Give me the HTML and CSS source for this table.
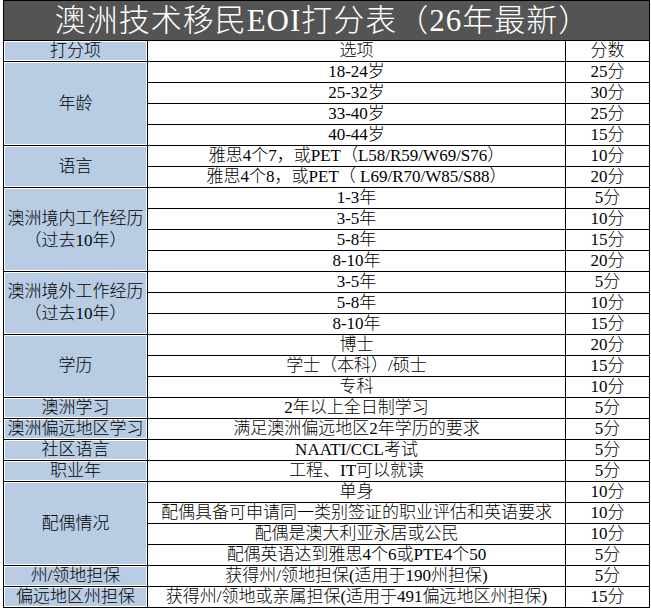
FILE: index.html
```html
<!DOCTYPE html>
<html lang="zh-CN">
<head>
<meta charset="utf-8">
<title>澳洲技术移民EOI打分表</title>
<link rel="stylesheet" href="styles.css">
</head>
<body>
<table class="eoi">
  <colgroup><col class="c1"><col class="c2"><col class="c3"></colgroup>
  <tr class="title"><td colspan="3">澳洲技术移民EOI打分表（26年最新）</td></tr>
  <tr><td class="cat">打分项</td><td>选项</td><td>分数</td></tr>
  <tr><td class="cat" rowspan="4">年龄</td><td>18-24岁</td><td>25分</td></tr>
  <tr><td>25-32岁</td><td>30分</td></tr>
  <tr><td>33-40岁</td><td>25分</td></tr>
  <tr><td>40-44岁</td><td>15分</td></tr>
  <tr><td class="cat" rowspan="2">语言</td><td>雅思4个7，或PET（L58/R59/W69/S76）</td><td>10分</td></tr>
  <tr><td>雅思4个8，或PET（ L69/R70/W85/S88）</td><td>20分</td></tr>
  <tr><td class="cat two" rowspan="4">澳洲境内工作经历<br>（过去10年）</td><td>1-3年</td><td>5分</td></tr>
  <tr><td>3-5年</td><td>10分</td></tr>
  <tr><td>5-8年</td><td>15分</td></tr>
  <tr><td>8-10年</td><td>20分</td></tr>
  <tr><td class="cat two" rowspan="3">澳洲境外工作经历<br>（过去10年）</td><td>3-5年</td><td>5分</td></tr>
  <tr><td>5-8年</td><td>10分</td></tr>
  <tr><td>8-10年</td><td>15分</td></tr>
  <tr><td class="cat" rowspan="3">学历</td><td>博士</td><td>20分</td></tr>
  <tr><td>学士（本科）/硕士</td><td>15分</td></tr>
  <tr><td>专科</td><td>10分</td></tr>
  <tr><td class="cat">澳洲学习</td><td>2年以上全日制学习</td><td>5分</td></tr>
  <tr><td class="cat">澳洲偏远地区学习</td><td>满足澳洲偏远地区2年学历的要求</td><td>5分</td></tr>
  <tr><td class="cat">社区语言</td><td>NAATI/CCL考试</td><td>5分</td></tr>
  <tr><td class="cat">职业年</td><td>工程、IT可以就读</td><td>5分</td></tr>
  <tr><td class="cat" rowspan="4">配偶情况</td><td>单身</td><td>10分</td></tr>
  <tr><td>配偶具备可申请同一类别签证的职业评估和英语要求</td><td>10分</td></tr>
  <tr><td>配偶是澳大利亚永居或公民</td><td>10分</td></tr>
  <tr><td>配偶英语达到雅思4个6或PTE4个50</td><td>5分</td></tr>
  <tr><td class="cat">州/领地担保</td><td>获得州/领地担保(适用于190州担保)</td><td>5分</td></tr>
  <tr><td class="cat">偏远地区州担保</td><td>获得州/领地或亲属担保(适用于491偏远地区州担保)</td><td>15分</td></tr>
</table>
</body>
</html>
```

FILE: styles.css
```css
html, body {
  margin: 0;
  padding: 0;
  background: #ffffff;
}

.eoi {
  border-collapse: collapse;
  table-layout: fixed;
  width: 647px;
  margin-left: 3px;
  font-family: "Liberation Serif", "Noto Sans CJK SC", serif;
  font-size: 17px;
  font-weight: 300;
  color: #000000;
}

.c1 { width: 144px; }
.c2 { width: 418px; }
.c3 { width: 84px; }

.eoi td {
  border: 1px solid #000000;
  padding: 0;
  height: 20px;
  line-height: 20px;
  text-align: center;
  vertical-align: middle;
  white-space: nowrap;
  overflow: hidden;
}

.eoi .title td {
  height: 39px;
  line-height: 39px;
  background: #545454;
  color: #ffffff;
  font-size: 31px;
  font-weight: 300;
  letter-spacing: 1px;
  padding-right: 8px;
}

.eoi td.cat {
  background: #b8cce4;
  box-shadow: inset 0 0 0 1px #ffffff;
}

.eoi td.two {
  line-height: 22px;
}
```
